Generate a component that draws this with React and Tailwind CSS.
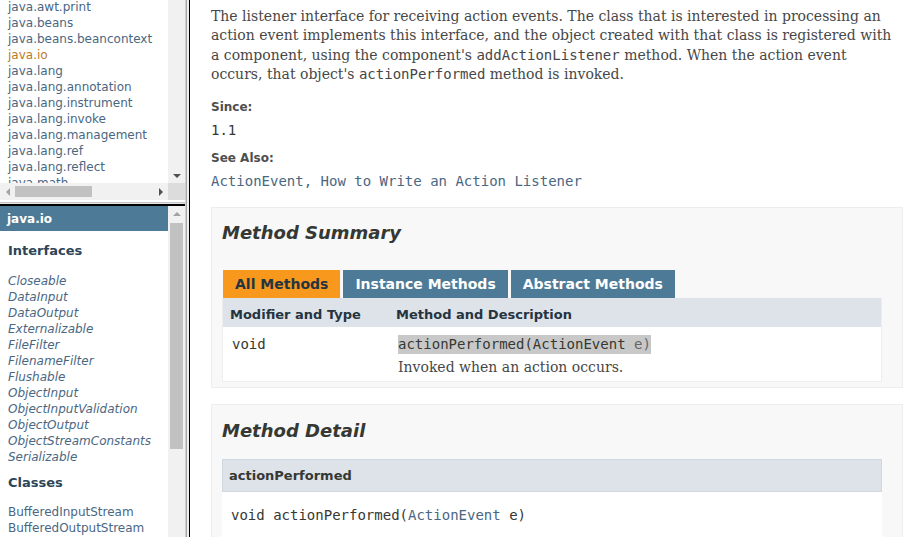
const SANS = "font-['DejaVu_Sans',Arial,sans-serif]";
const MONO = "font-['DejaVu_Sans_Mono',monospace]";
const SERIF = "font-['DejaVu_Serif',Georgia,serif]";

const PACKAGES = [
  'java.awt.print',
  'java.beans',
  'java.beans.beancontext',
  'java.io',
  'java.lang',
  'java.lang.annotation',
  'java.lang.instrument',
  'java.lang.invoke',
  'java.lang.management',
  'java.lang.ref',
  'java.lang.reflect',
  'java.math',
];

const INTERFACES = [
  'Closeable',
  'DataInput',
  'DataOutput',
  'Externalizable',
  'FileFilter',
  'FilenameFilter',
  'Flushable',
  'ObjectInput',
  'ObjectInputValidation',
  'ObjectOutput',
  'ObjectStreamConstants',
  'Serializable',
];

const CLASSES = ['BufferedInputStream', 'BufferedOutputStream', 'BufferedReader'];

function Arrow({ dir, color }) {
  const pts = {
    down: '0,0 8,0 4,4',
    up: '0,4 8,4 4,0',
    left: '4,0 4,8 0,4',
    right: '0,0 0,8 4,4',
  }[dir];
  const vertical = dir === 'up' || dir === 'down';
  return (
    <svg width={vertical ? 8 : 4} height={vertical ? 4 : 8} viewBox={vertical ? '0 0 8 4' : '0 0 4 8'}>
      <polygon points={pts} fill={color} />
    </svg>
  );
}

function TopFrame() {
  return (
    <div className="h-[202px] flex flex-col">
      <div className="flex h-[183px]">
        <div className="w-[168px] overflow-hidden bg-white">
          <ul className={`${SANS} text-[12px] leading-[16px] pl-[8px] -mt-[1px] whitespace-nowrap`}>
            {PACKAGES.map((p) => (
              <li key={p} className={p === 'java.io' ? 'text-[#bb7a2a]' : 'text-[#4A6782]'}>
                {p}
              </li>
            ))}
          </ul>
        </div>
        <div className="w-[17px] bg-[#f1f1f1] flex flex-col justify-end items-center pb-[5px]">
          <Arrow dir="down" color="#505050" />
        </div>
      </div>
      <div className="flex h-[17px]">
        <div className="w-[168px] bg-[#f1f1f1] flex items-center">
          <div className="w-[15px] flex justify-center">
            <Arrow dir="left" color="#a3a3a3" />
          </div>
          <div className="w-[77px] h-[11px] bg-[#c1c1c1]" />
          <div className="flex-1" />
          <div className="w-[15px] flex justify-center">
            <Arrow dir="right" color="#505050" />
          </div>
        </div>
        <div className="w-[17px] bg-[#dcdcdc]" />
      </div>
    </div>
  );
}

function BottomFrame() {
  return (
    <div className="flex flex-1 min-h-0">
      <div className={`w-[168px] overflow-hidden bg-white ${SANS}`}>
        <div className="h-[25px] bg-[#4D7A97] text-white text-[12px] font-bold flex items-center pl-[7px]">
          java.io
        </div>
        <h2 className="text-[13px] font-bold text-[#2c4557] pl-[8px] mt-[11px] leading-[18px]">Interfaces</h2>
        <ul className="text-[12px] leading-[16px] pl-[8px] mt-[13px] italic text-[#4A6782] whitespace-nowrap">
          {INTERFACES.map((i) => (
            <li key={i}>{i}</li>
          ))}
        </ul>
        <h2 className="text-[13px] font-bold text-[#2c4557] pl-[8px] mt-[9px] leading-[18px]">Classes</h2>
        <ul className="text-[12px] leading-[16px] pl-[8px] mt-[12px] text-[#4A6782] whitespace-nowrap">
          {CLASSES.map((c) => (
            <li key={c}>{c}</li>
          ))}
        </ul>
      </div>
      <div className="w-[17px] bg-[#f1f1f1] flex flex-col items-center pt-[6px]">
        <Arrow dir="up" color="#a3a3a3" />
        <div className="w-[13px] h-[226px] bg-[#c1c1c1] mt-[7px]" />
      </div>
    </div>
  );
}

function Tab({ label, active }) {
  return (
    <span
      className={`h-[28px] px-[12px] mr-[3px] flex items-center text-[14px] font-bold ${
        active ? 'bg-[#F8981D] text-[#253441]' : 'bg-[#4D7A97] text-white'
      }`}
    >
      {label}
    </span>
  );
}

function MethodSummary() {
  return (
    <section className="border border-[#ededed] bg-[#f8f8f8] pl-[10px] pr-[20px] pt-[14px] pb-[5px]">
      <h3 className={`${SANS} text-[18px] leading-[22px] font-bold italic text-[#353833]`}>Method Summary</h3>
      <div className={`${SANS} flex mt-[26px] ml-[1px]`}>
        <Tab label="All Methods" active />
        <Tab label="Instance Methods" />
        <Tab label="Abstract Methods" />
      </div>
      <div className="border-x border-b border-[#eeeeee] bg-white">
        <div className={`${SANS} h-[29px] bg-[#dee3e9] flex items-center text-[13px] font-bold text-[#253441] pt-[3px]`}>
          <span className="w-[173px] pl-[7px]">Modifier and Type</span>
          <span>Method and Description</span>
        </div>
        <div className="flex h-[54px] pt-[8px]">
          <span className={`${MONO} w-[175px] pl-[9px] text-[14px] leading-[19px] text-[#353833]`}>void</span>
          <div>
            <div className={`${MONO} text-[14px] leading-[19px] bg-[#c8c8c8] text-[#353833] w-fit`}>
              actionPerformed(ActionEvent<span className="text-[#666]"> e)</span>
            </div>
            <div className={`${SERIF} text-[14px] leading-[19px] text-[#474747] mt-[4px]`}>
              Invoked when an action occurs.
            </div>
          </div>
        </div>
      </div>
    </section>
  );
}

function MethodDetail() {
  return (
    <section className="border border-[#ededed] bg-[#f8f8f8] pl-[10px] pr-[20px] pt-[15px] flex-1">
      <h3 className={`${SANS} text-[18px] leading-[22px] font-bold italic text-[#353833]`}>Method Detail</h3>
      <h4
        className={`${SANS} mt-[17px] h-[33px] bg-[#dee3e9] border border-[#d0d9e0] text-[13px] font-bold text-[#353833] flex items-center pl-[6px]`}
      >
        actionPerformed
      </h4>
      <div className="bg-white h-[60px] pt-[10px] pl-[9px]">
        <span className={`${MONO} text-[14px] leading-[19px] text-[#353833]`}>
          void actionPerformed(<span className="text-[#4A6782]">ActionEvent</span> e)
        </span>
      </div>
    </section>
  );
}

export default function App() {
  return (
    <div className="w-[920px] h-[537px] flex overflow-hidden bg-white">
      <div className="w-[185px] flex flex-col">
        <TopFrame />
        <div className="h-[4px] bg-[#e4e4e4] border-t border-[#c4c4c4] border-b-2 border-b-black" />
        <BottomFrame />
      </div>
      <div className="w-[5px] flex">
        <div className="w-[1px] bg-[#d0d0d0]" />
        <div className="w-[1px] bg-[#a8a8a8]" />
        <div className="w-[2px] bg-[#eeeeee]" />
        <div className="w-[1px] bg-black" />
      </div>
      <div className="flex-1 flex flex-col pl-[21px] pr-[17px] pt-[7px] overflow-hidden">
        <div className={`${SERIF} w-[685px] text-[14px] leading-[19.33px] text-[#474747]`}>
          The listener interface for receiving action events. The class that is interested in processing an action
          event implements this interface, and the object created with that class is registered with a component,
          using the component's <code className={`${MONO} leading-[1]`}>addActionListener</code> method. When the
          action event occurs, that object's <code className={`${MONO} leading-[1]`}>actionPerformed</code> method is
          invoked.
        </div>
        <dl className="mt-[15px]">
          <dt className={`${SANS} text-[12px] leading-[16px] font-bold text-[#4E4E4E]`}>Since:</dt>
          <dd className={`${MONO} text-[14px] leading-[19px] text-[#353833] mt-[6px]`}>1.1</dd>
          <dt className={`${SANS} text-[12px] leading-[16px] font-bold text-[#4E4E4E] mt-[10px]`}>See Also:</dt>
          <dd className={`${MONO} text-[14px] leading-[19px] text-[#4A6782] mt-[6px]`}>
            ActionEvent, How to Write an Action Listener
          </dd>
        </dl>
        <div className="mt-[16px]">
          <MethodSummary />
        </div>
        <div className="mt-[16px] flex flex-col flex-1">
          <MethodDetail />
        </div>
      </div>
    </div>
  );
}
